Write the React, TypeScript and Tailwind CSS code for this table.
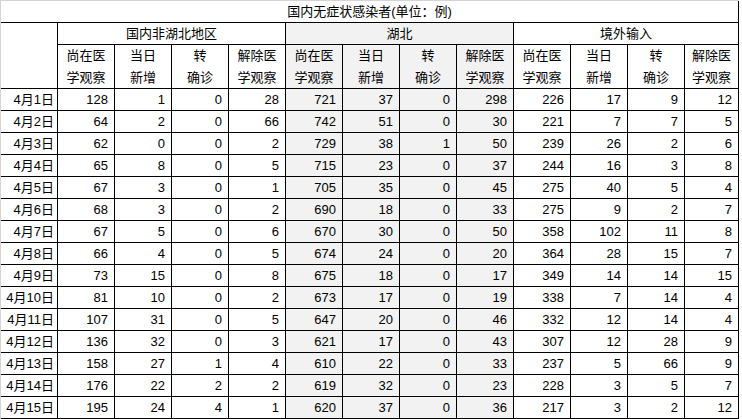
import type React from "react"

type Row = [string, number[]]

const rows: Row[] = [
  ["4月1日", [128, 1, 0, 28, 721, 37, 0, 298, 226, 17, 9, 12]],
  ["4月2日", [64, 2, 0, 66, 742, 51, 0, 30, 221, 7, 7, 5]],
  ["4月3日", [62, 0, 0, 2, 729, 38, 1, 50, 239, 26, 2, 6]],
  ["4月4日", [65, 8, 0, 5, 715, 23, 0, 37, 244, 16, 3, 8]],
  ["4月5日", [67, 3, 0, 1, 705, 35, 0, 45, 275, 40, 5, 4]],
  ["4月6日", [68, 3, 0, 2, 690, 18, 0, 33, 275, 9, 2, 7]],
  ["4月7日", [67, 5, 0, 6, 670, 30, 0, 50, 358, 102, 11, 8]],
  ["4月8日", [66, 4, 0, 5, 674, 24, 0, 20, 364, 28, 15, 7]],
  ["4月9日", [73, 15, 0, 8, 675, 18, 0, 17, 349, 14, 14, 15]],
  ["4月10日", [81, 10, 0, 2, 673, 17, 0, 19, 338, 7, 14, 4]],
  ["4月11日", [107, 31, 0, 5, 647, 20, 0, 46, 332, 12, 14, 4]],
  ["4月12日", [136, 32, 0, 3, 621, 17, 0, 43, 307, 12, 28, 9]],
  ["4月13日", [158, 27, 1, 4, 610, 22, 0, 33, 237, 5, 66, 9]],
  ["4月14日", [176, 22, 2, 2, 619, 32, 0, 23, 228, 3, 5, 7]],
  ["4月15日", [195, 24, 4, 1, 620, 37, 0, 36, 217, 3, 2, 12]],
]

const groups = ["国内非湖北地区", "湖北", "境外输入"]
const subHeads: [string, string][] = [
  ["尚在医", "学观察"],
  ["当日", "新增"],
  ["转", "确诊"],
  ["解除医", "学观察"],
]

const cell = "border-b border-r border-black"

const App: React.FC = () => {
  return (
    <div
      className="w-[742px] h-[419px] bg-white text-[13px] text-black overflow-hidden"
      style={{ fontFamily: '"Liberation Sans", "Noto Sans CJK SC", sans-serif' }}
    >
      <div className="border-l border-t border-[#d4d4d4] w-fit">
        <div className="grid grid-cols-[repeat(12,57px)_54px] auto-rows-[22px]">
          {/* title */}
          <div className={`${cell} col-span-13 flex items-center justify-center`}>
            国内无症状感染者(单位：例)
          </div>

          {/* group headers */}
          <div className={`${cell} row-span-3`} />
          {groups.map((g, i) => (
            <div
              key={g}
              className={`${cell} col-span-4 flex items-center justify-center ${i === 1 ? "bg-[#f2f2f2]" : ""}`}
            >
              {g}
            </div>
          ))}

          {/* sub headers */}
          {groups.map((g, gi) =>
            subHeads.map(([a, b]) => (
              <div
                key={g + a}
                className={`${cell} row-span-2 flex flex-col items-center justify-center leading-[22px] ${gi === 1 ? "bg-[#f2f2f2]" : ""}`}
              >
                <span>{a}</span>
                <span>{b}</span>
              </div>
            ))
          )}

          {/* data */}
          {rows.map(([date, vals]) => (
            <div key={date} className="contents">
              <div className={`${cell} flex items-center justify-end pr-[3px]`}>{date}</div>
              {vals.map((v, i) => (
                <div
                  key={i}
                  className={`${cell} flex items-center justify-end pr-[6px] ${i >= 4 && i < 8 ? "bg-[#f2f2f2]" : ""}`}
                >
                  {v}
                </div>
              ))}
            </div>
          ))}
        </div>
      </div>
    </div>
  )
}

export default App
